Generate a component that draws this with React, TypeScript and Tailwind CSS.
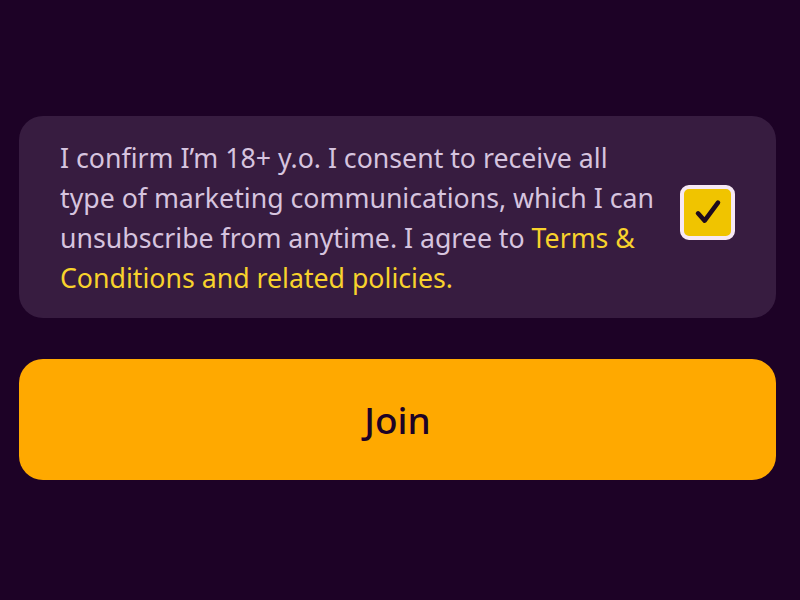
import React from 'react';

export default function App() {
  const [checked, setChecked] = React.useState(true);

  return (
    <div
      className="w-[800px] h-[600px] bg-[#1d0226] pl-[19px] pt-[116px]"
      style={{ fontFamily: '"Noto Sans", "Open Sans", sans-serif' }}
    >
      <div className="flex w-[757px] items-center justify-between rounded-[24px] bg-[#371c40] pl-[41px] pr-[41px] pt-[22px] pb-[20px]">
        <p className="w-[610px] whitespace-nowrap text-[26.7px] leading-[40px] text-[#d6c4df]">
          I confirm I’m 18+ y.o. I consent to receive all
          <br />
          type of marketing communications, which I can
          <br />
          unsubscribe from anytime. I agree to{' '}
          <span className="text-[#f8d22c]">Terms &amp;</span>
          <br />
          <span className="text-[#f8d22c]">Conditions and related policies.</span>
        </p>
        <button
          onClick={() => setChecked(!checked)}
          className="mb-[12px] flex h-[55px] w-[55px] shrink-0 items-center justify-center rounded-[9px] border-[4px] border-[#f6e8f4] bg-[#f0c400]"
        >
          {checked && (
            <svg width="32" height="32" viewBox="0 0 24 24" fill="none">
              <path d="M4.5 13l5 5.5L19.5 5" stroke="#1d0a1e" strokeWidth="3.4" strokeLinecap="round" strokeLinejoin="round" />
            </svg>
          )}
        </button>
      </div>

      <button className="mt-[41px] flex h-[121px] w-[757px] items-center justify-center rounded-[24px] bg-[#ffa900] text-[37px] font-medium text-[#1d0226]">
        Join
      </button>
    </div>
  );
}
